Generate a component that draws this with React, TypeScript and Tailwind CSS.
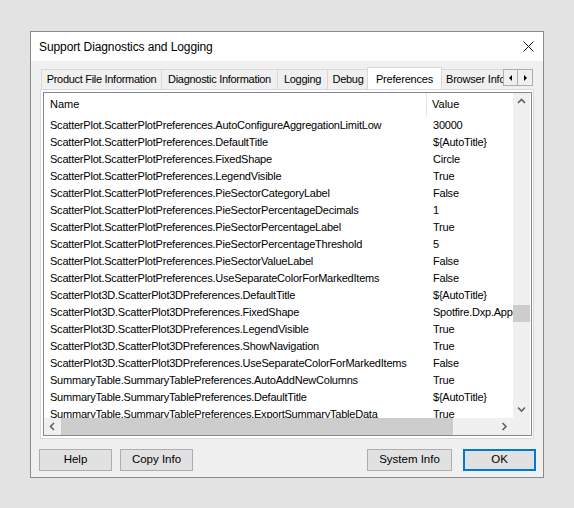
import React from "react";

const rows: [string, string][] = [
  ["ScatterPlot.ScatterPlotPreferences.AutoConfigureAggregationLimitLow", "30000"],
  ["ScatterPlot.ScatterPlotPreferences.DefaultTitle", "${AutoTitle}"],
  ["ScatterPlot.ScatterPlotPreferences.FixedShape", "Circle"],
  ["ScatterPlot.ScatterPlotPreferences.LegendVisible", "True"],
  ["ScatterPlot.ScatterPlotPreferences.PieSectorCategoryLabel", "False"],
  ["ScatterPlot.ScatterPlotPreferences.PieSectorPercentageDecimals", "1"],
  ["ScatterPlot.ScatterPlotPreferences.PieSectorPercentageLabel", "True"],
  ["ScatterPlot.ScatterPlotPreferences.PieSectorPercentageThreshold", "5"],
  ["ScatterPlot.ScatterPlotPreferences.PieSectorValueLabel", "False"],
  ["ScatterPlot.ScatterPlotPreferences.UseSeparateColorForMarkedItems", "False"],
  ["ScatterPlot3D.ScatterPlot3DPreferences.DefaultTitle", "${AutoTitle}"],
  ["ScatterPlot3D.ScatterPlot3DPreferences.FixedShape", "Spotfire.Dxp.Application.Visuals.MarkerShape"],
  ["ScatterPlot3D.ScatterPlot3DPreferences.LegendVisible", "True"],
  ["ScatterPlot3D.ScatterPlot3DPreferences.ShowNavigation", "True"],
  ["ScatterPlot3D.ScatterPlot3DPreferences.UseSeparateColorForMarkedItems", "False"],
  ["SummaryTable.SummaryTablePreferences.AutoAddNewColumns", "True"],
  ["SummaryTable.SummaryTablePreferences.DefaultTitle", "${AutoTitle}"],
  ["SummaryTable.SummaryTablePreferences.ExportSummaryTableData", "True"],
];

const tabs = [
  { label: "Product File Information", w: "w-[121px]" },
  { label: "Diagnostic Information", w: "w-[117px]" },
  { label: "Logging", w: "w-[51px]" },
  { label: "Debug", w: "w-[42px]" },
];

function Chevron({ dir }: { dir: "up" | "down" | "left" | "right" }) {
  const pts = {
    up: "1,5 4.5,1.5 8,5",
    down: "1,1.5 4.5,5 8,1.5",
    left: "5,1 1.5,4.5 5,8",
    right: "1.5,1 5,4.5 1.5,8",
  }[dir];
  const vertical = dir === "up" || dir === "down";
  return (
    <svg width={vertical ? 9 : 7} height={vertical ? 7 : 9} viewBox={vertical ? "0 0 9 7" : "0 0 7 9"}>
      <polyline points={pts} fill="none" stroke="#606060" strokeWidth="1.6" />
    </svg>
  );
}

function Button({ label, w, primary }: { label: string; w: string; primary?: boolean }) {
  return (
    <div
      className={`${w} h-[22px] flex items-center justify-center bg-[#e1e1e1] text-[11.5px] text-black ${
        primary ? "border-2 border-[#0078d7]" : "border border-[#adadad]"
      }`}
    >
      {label}
    </div>
  );
}

export default function App() {
  return (
    <div
      className="w-[574px] h-[508px] bg-[#e3e3e3] pl-[30px] pt-[31px]"
      style={{ fontFamily: '"Liberation Sans", Arial, sans-serif' }}
    >
      <div className="w-[514px] h-[447px] border border-[#8a8a8a] bg-[#f0f0f0] flex flex-col">
        {/* title bar */}
        <div className="h-[29px] bg-white flex items-center justify-between pl-[8px] pr-[9px]">
          <span className="text-[12px] text-black tracking-[-0.1px]">Support Diagnostics and Logging</span>
          <svg width="11" height="11" viewBox="0 0 11 11">
            <path d="M0.5 0.5 L10.5 10.5 M10.5 0.5 L0.5 10.5" stroke="#111" strokeWidth="1" />
          </svg>
        </div>

        <div className="px-[9px] pt-[7px]">
          {/* tab strip */}
          <div className="flex items-end h-[21px] pl-[1px] relative z-10">
            <div className="flex items-end w-[462px] overflow-hidden">
              {tabs.map((t) => (
                <div
                  key={t.label}
                  className={`${t.w} shrink-0 h-[20px] border border-b-0 border-[#d9d9d9] -ml-[1px] first:ml-0 bg-[#f0f0f0] text-[11px] tracking-[-0.3px] text-black flex items-center justify-center whitespace-nowrap`}
                >
                  {t.label}
                </div>
              ))}
              <div className="w-[75px] shrink-0 h-[23px] -mx-[2px] -mb-[1px] bg-white border border-b-0 border-[#d9d9d9] text-[11px] tracking-[-0.2px] text-black flex items-start justify-center pt-[3px] z-10 whitespace-nowrap">
                Preferences
              </div>
              <div className="w-[70px] shrink-0 h-[20px] border border-b-0 border-[#d9d9d9] bg-[#f0f0f0] text-[11px] tracking-[-0.2px] text-black flex items-center pl-[5px] whitespace-nowrap">
                Browser Information
              </div>
            </div>
            <div className="flex self-start mt-[1px]">
              <div className="w-[15px] h-[17px] border border-[#adadad] bg-[#f0f0f0] flex items-center justify-center">
                <span className="block w-0 h-0 border-y-[3px] border-y-transparent border-r-[3px] border-r-black" />
              </div>
              <div className="w-[15px] h-[17px] border border-l-0 border-[#adadad] bg-[#f0f0f0] flex items-center justify-center">
                <span className="block w-0 h-0 border-y-[3px] border-y-transparent border-l-[3px] border-l-black" />
              </div>
            </div>
          </div>

          {/* tab page */}
          <div className="h-[350px] border border-[#d9d9d9] bg-white p-[2px] pr-[1px]">
            <div className="h-full border border-[#828790] flex flex-col">
              <div className="flex flex-1 min-h-0">
                <div className="w-[469px] overflow-hidden text-[11px] text-black">
                  <div className="flex h-[24px] items-center">
                    <div className="w-[383px] shrink-0 h-full pl-[6px] pb-[2px] flex items-center border-r border-[#e5e5e5]">
                      Name
                    </div>
                    <div className="pl-[5px] pb-[2px]">Value</div>
                  </div>
                  {rows.map(([n, v]) => (
                    <div key={n} className="flex h-[17px] items-center whitespace-nowrap">
                      <div className="w-[383px] shrink-0 pl-[6px] tracking-[-0.22px]">{n}</div>
                      <div className="pl-[6px] tracking-[-0.22px]">{v}</div>
                    </div>
                  ))}
                </div>
                {/* vertical scrollbar */}
                <div className="w-[17px] bg-[#f0f0f0] flex flex-col">
                  <div className="h-[17px] flex items-center justify-center">
                    <Chevron dir="up" />
                  </div>
                  <div className="flex-1 flex flex-col">
                    <div className="h-[195px]" />
                    <div className="h-[17px] bg-[#cdcdcd]" />
                  </div>
                  <div className="h-[17px] flex items-center justify-center">
                    <Chevron dir="down" />
                  </div>
                </div>
              </div>
              {/* horizontal scrollbar */}
              <div className="flex h-[17px]">
                <div className="w-[469px] bg-[#f0f0f0] flex">
                  <div className="w-[17px] flex items-center justify-center">
                    <Chevron dir="left" />
                  </div>
                  <div className="w-[392px] bg-[#cdcdcd]" />
                  <div className="flex-1" />
                  <div className="w-[17px] flex items-center justify-center">
                    <Chevron dir="right" />
                  </div>
                </div>
                <div className="w-[17px] bg-[#f0f0f0]" />
              </div>
            </div>
          </div>
        </div>

        {/* buttons */}
        <div className="flex items-center mt-[10px] pl-[8px] pr-[7px]">
          <Button label="Help" w="w-[73px]" />
          <div className="w-[8px]" />
          <Button label="Copy Info" w="w-[73px]" />
          <div className="flex-1" />
          <Button label="System Info" w="w-[85px]" />
          <div className="w-[11px]" />
          <Button label="OK" w="w-[73px]" primary />
        </div>
      </div>
    </div>
  );
}
